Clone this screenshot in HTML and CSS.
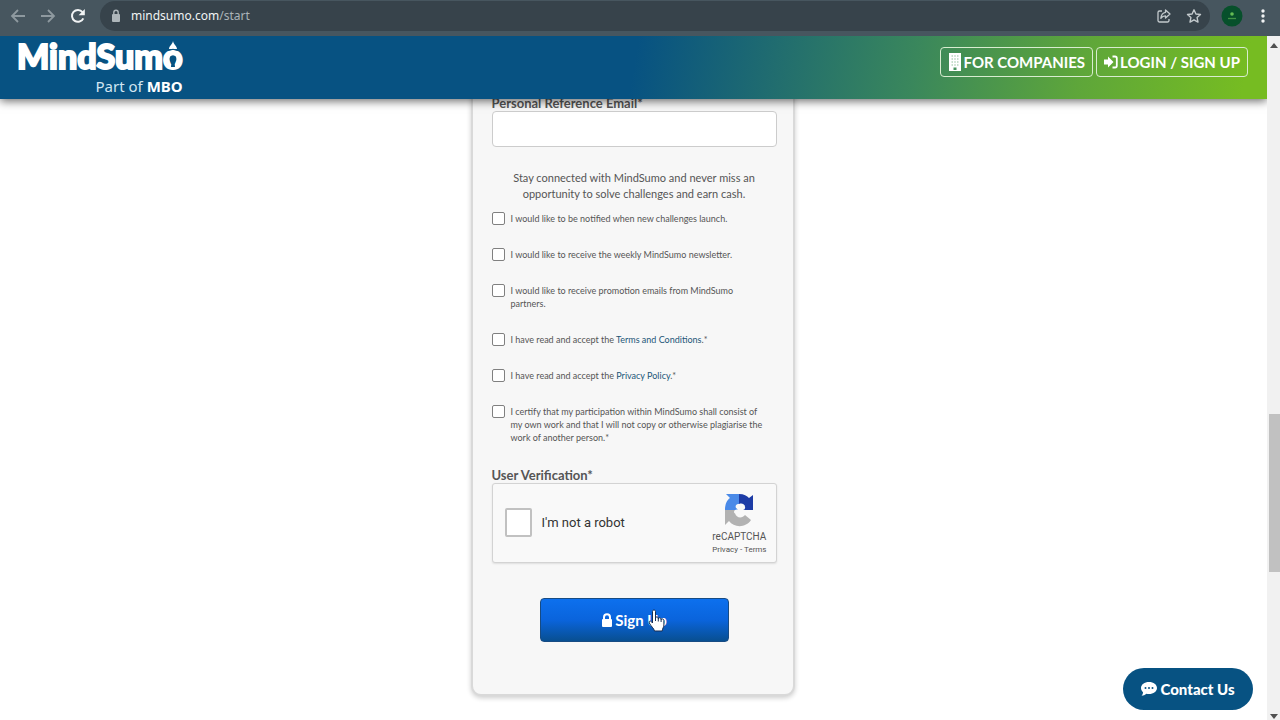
FILE: index.html
```html
<!DOCTYPE html>
<html lang="en">
<head>
<meta charset="utf-8">
<meta name="viewport" content="width=device-width, initial-scale=1">
<title>MindSumo</title>
<link rel="stylesheet" href="styles.css">
</head>
<body>
<div class="toolbar">
  <button class="tool dim" type="button" aria-label="Back"><svg width="16" height="16" viewBox="0 0 16 16"><path d="M15 8H2.5M8 2 2 8l6 6" fill="none" stroke="currentColor" stroke-width="1.8"/></svg></button>
  <button class="tool dim" type="button" aria-label="Forward"><svg width="16" height="16" viewBox="0 0 16 16"><path d="M1 8h12.500M8 2l6 6-6 6" fill="none" stroke="currentColor" stroke-width="1.8"/></svg></button>
  <button class="tool" type="button" aria-label="Reload"><svg width="16" height="16" viewBox="0 0 16 16"><path d="M13.300 10.300A5.900 5.900 0 1 1 12.500 4.200" fill="none" stroke="currentColor" stroke-width="2"/><path d="M14.800 1v6.200H8.600z" fill="currentColor"/></svg></button>
  <div class="address">
    <svg class="padlock" width="10" height="14" viewBox="0 0 10 14"><rect x="1" y="5" width="8" height="8" rx="1" fill="currentColor"/><path d="M2.800 6V3.500a2.200 2.200 0 0 1 4.400 0V6" fill="none" stroke="currentColor" stroke-width="1.400"/></svg>
    <span class="url">mindsumo.com<span class="path">/start</span></span>
    <button class="tool soft" type="button" aria-label="Share"><svg width="16" height="16" viewBox="0 0 16 16" fill="none" stroke="currentColor" stroke-width="1.300" stroke-linejoin="round"><path d="M6 3H3.500A1.500 1.500 0 0 0 2 4.500v8A1.500 1.500 0 0 0 3.500 14h8a1.500 1.500 0 0 0 1.500-1.500V11"/><path d="M9.500 2 14 6l-4.500 4V7.800C7.300 7.800 6 8.500 4.800 10.300 5.200 7 6.800 4.700 9.500 4.300z"/></svg></button>
    <button class="tool soft" type="button" aria-label="Bookmark"><svg width="16" height="16" viewBox="0 0 16 16"><path d="m8 1.800 1.900 4.200 4.600.5-3.400 3.100.9 4.500-4-2.300-4 2.300.9-4.500L1.500 6.500 6.100 6z" fill="none" stroke="currentColor" stroke-width="1.400" stroke-linejoin="round"/></svg></button>
  </div>
  <button class="tool profile" type="button" aria-label="Profile"><svg width="22" height="22" viewBox="0 0 22 22"><circle cx="11" cy="11" r="10.500" fill="#07502b"/><circle cx="11" cy="9" r="1.800" fill="#65bd54"/><path d="M7 13.500h8" stroke="#429345" stroke-width="1.300"/></svg></button>
  <button class="tool menu" type="button" aria-label="Menu"><svg width="6" height="16" viewBox="0 0 6 16" fill="currentColor"><circle cx="3" cy="3" r="1.700"/><circle cx="3" cy="8" r="1.700"/><circle cx="3" cy="13" r="1.700"/></svg></button>
</div>
<div class="window">
  <div class="page">
    <header class="header">
      <a class="brand" href="#">
        <span class="wordmark">MindSum<span class="brand-o">o<svg class="flame" width="18" height="30" viewBox="0 0 18 30"><path d="M9 0c.5 3.400 4 5 4 8H5c0-3 3.500-4.600 4-8z" fill="#fff"/><path d="M4 9.500q5-2.500 10 0" fill="none" stroke="#075282" stroke-width="1"/><circle cx="9" cy="18" r="3.400" fill="#075282"/><path d="M7.600 20h2.800l.6 6H7z" fill="#075282"/></svg></span></span>
        <span class="tagline">Part of <b>MBO</b></span>
      </a>
      <nav class="nav">
        <a class="nav-link" href="#"><svg width="14" height="18" viewBox="0 0 14 18"><path d="M1 0h12v18H1z" fill="#fff"/><path d="M3.500 3h7M3.500 6h7M3.500 9h7M3.500 12h7" stroke="#8fc09b" stroke-width="1.200" stroke-dasharray="1.500 1.250"/><path d="M5.500 14.500h3V17h-3z" fill="#4b9561"/></svg>FOR COMPANIES</a>
        <a class="nav-link" href="#"><svg width="14" height="14" viewBox="0 0 14 14"><path d="M0 4.500h4V1.500L9.500 7 4 12.500V9.500H0z" fill="#fff"/><path d="M8.500 1.500H11A1.800 1.800 0 0 1 12.800 3.300v7.400A1.800 1.800 0 0 1 11 12.500H8.500" fill="none" stroke="#fff" stroke-width="1.800"/></svg>LOGIN / SIGN UP</a>
      </nav>
    </header>
    <main class="main">
      <form class="card">
        <label class="label" for="reference">Personal Reference Email*</label>
        <input class="field" id="reference" type="email">
        <p class="intro">Stay connected with MindSumo and never miss an opportunity to solve challenges and earn cash.</p>
        <div class="options">
          <div class="option"><input class="tick" type="checkbox" id="c1"><label for="c1">I would like to be notified when new challenges launch.</label></div>
          <div class="option"><input class="tick" type="checkbox" id="c2"><label for="c2">I would like to receive the weekly MindSumo newsletter.</label></div>
          <div class="option"><input class="tick" type="checkbox" id="c3"><label for="c3">I would like to receive promotion emails from MindSumo partners.</label></div>
          <div class="option"><input class="tick" type="checkbox" id="c4"><label for="c4">I have read and accept the <a href="#">Terms and Conditions</a>.*</label></div>
          <div class="option"><input class="tick" type="checkbox" id="c5"><label for="c5">I have read and accept the <a href="#">Privacy Policy</a>.*</label></div>
          <div class="option"><input class="tick" type="checkbox" id="c6"><label for="c6">I certify that my participation within MindSumo shall consist of my own work and that I will not copy or otherwise plagiarise the work of another person.*</label></div>
        </div>
        <div class="label">User Verification*</div>
        <div class="captcha">
          <input class="robot" type="checkbox" id="robot">
          <label class="robot-label" for="robot">I'm not a robot</label>
          <div class="captcha-brand">
            <svg width="30" height="34" viewBox="0 0 30 34"><path d="M1 17C1 11 3 7 6 5L2 1h13v10c-3 0-4 2-3 4l3 2z" fill="#4a8ae8"/><path d="M15 1c5 0 8 2 10 4l4-3v15H18l3-4c-1-2-3-3-6-2z" fill="#1d3ca6"/><path d="M1 17v15l4-4c5 7 17 7 22-1l-6-5c-3 4-9 3-10-2l4-3z" fill="#b2b2b2"/><path d="M15 17c-3-1-3-5 0-5 1 0 2 1 2 2 2-2 5-1 4 1 0 1-1 2-2 2 2 2 0 5-2 4l-2-2c-1 2-5 2-5 0s2-3 5-2z" fill="#f9f9f9"/></svg>
            <span class="captcha-name">reCAPTCHA</span>
            <span class="captcha-links"><a href="#">Privacy</a> - <a href="#">Terms</a></span>
          </div>
        </div>
        <button class="submit" type="button"><svg width="12" height="14" viewBox="0 0 12 14"><rect x="1" y="6" width="10" height="8" rx="1" fill="#fff"/><path d="M3 7V4.200a3 3 0 0 1 6 0V7" fill="none" stroke="#fff" stroke-width="2"/></svg>Sign Up
          <svg class="cursor" width="18" height="24" viewBox="0 0 18 24"><path d="M4.500 14V2.500c0-2 3-2 3 0V9c0-1.500 2.600-1.500 2.800 0v.7c.3-1.400 2.600-1.200 2.800.3v.6c.5-1.200 2.800-.8 2.800.9V16c0 2-1.500 3.500-1.700 6H6.500C6 19.500 2.800 17 1.300 14c-.8-1.800 1-2.600 2-1.400z" fill="#fff" stroke="#182d52" stroke-width="1"/><path d="M7.500 8v4M10.300 9v3.500M13.100 10v3" stroke="#182d52" stroke-width="1"/></svg>
        </button>
      </form>
    </main>
    <button class="contact" type="button"><svg width="16" height="14" viewBox="0 0 16 14"><path d="M8 0c4.500 0 8 2.600 8 6s-3.500 6-8 6c-1 0-1.800-.1-2.600-.3C4 13 2.300 13.700.5 13.700 1.600 12.700 2 11.500 2 10.200.8 9.200 0 7.700 0 6c0-3.400 3.500-6 8-6z" fill="#fff"/><circle cx="4.500" cy="6" r="1" fill="#075282"/><circle cx="8" cy="6" r="1" fill="#075282"/><circle cx="11.500" cy="6" r="1" fill="#075282"/></svg>Contact Us</button>
  </div>
  <div class="scrollbar">
    <svg width="8" height="5" viewBox="0 0 8 5"><path d="M4 0l4 5H0z" fill="#505050"/></svg>
    <div class="track"><div class="thumb"></div></div>
    <svg width="8" height="5" viewBox="0 0 8 5"><path d="M0 0h8L4 5z" fill="#505050"/></svg>
  </div>
</div>
</body>
</html>
```
FILE: styles.css
```css
* { box-sizing: border-box; }
body {
  margin: 0;
  height: 100vh;
  display: flex;
  flex-direction: column;
  overflow: hidden;
  font-family: Lato, "Liberation Sans", sans-serif;
  color: #555;
  background: #fff;
}
button { font-family: inherit; border: 0; cursor: pointer; }
a { color: #1c5677; text-decoration: none; }
svg { flex: none; }

.toolbar {
  display: flex;
  align-items: center;
  height: 36px;
  padding: 0 14px 4px 10px;
  background: #47565f;
}
.tool {
  display: flex;
  padding: 0;
  margin-right: 14px;
  background: none;
  color: #f1f3f4;
}
.tool.dim { color: #8e999f; }
.toolbar > .tool { width: 16px; }
.tool.soft { color: #c3cacd; margin: 0 0 0 14px; }
.address {
  flex: 1;
  display: flex;
  align-items: center;
  height: 30px;
  padding: 0 8px 0 11px;
  border-radius: 15px;
  background: #37434b;
}
.padlock { color: #aeb6ba; margin-right: 10px; }
.url {
  flex: 1;
  font: 12px/20px "Noto Sans", sans-serif;
  color: #f0f3f4;
}
.path { color: #aab3b8; }
.toolbar > .profile { width: 22px; margin: 0 17px 0 11px; }
.toolbar > .menu { width: 6px; margin: 0; }

.window { flex: 1; min-height: 0; display: flex; }
.page {
  flex: 1;
  display: flex;
  flex-direction: column;
  position: relative;
  min-width: 0;
  overflow: hidden;
}
.header {
  position: relative;
  z-index: 1;
  display: flex;
  justify-content: space-between;
  align-items: flex-start;
  height: 63px;
  flex: none;
  padding: 0 19px 0 17px;
  background: linear-gradient(100deg, #075282 0%, #075282 50%, #3a875c 72%, #5ea63a 85%, #76bc22 98%);
  box-shadow: 0 2px 9px rgba(0, 0, 0, .6);
}
.brand { display: flex; flex-direction: column; align-items: flex-end; color: #fff; }
.wordmark {
  font-size: 34px;
  font-weight: 900;
  line-height: 40px;
  -webkit-text-stroke: 2px #fff;
}
.brand-o { position: relative; }
.flame { position: absolute; left: 1px; top: 6px; }
.tagline { font: 15px/20px "Noto Sans", sans-serif; color: #d2e6f2; }
.tagline b { color: #fff; }
.nav { display: flex; gap: 3px; padding-top: 11px; }
.nav-link {
  display: flex;
  align-items: center;
  gap: 2px;
  height: 30px;
  padding: 0 7px;
  border: 1px solid #d8ecd0;
  border-radius: 4px;
  color: #fff;
  font-size: 15px;
  font-weight: 700;
}

.main { flex: 1; min-height: 0; padding-right: 2px; }
.card {
  width: 324px;
  margin: -22px auto 0;
  padding: 16px 16px 52px 19px;
  border: 2px solid #d9d9d9;
  border-radius: 10px;
  background: #f7f7f7;
  box-shadow: 0 2px 5px rgba(0, 0, 0, .2);
}
.label { display: block; font-size: 13px; font-weight: 700; line-height: 16px; }
.field {
  display: block;
  width: 100%;
  height: 36px;
  border: 1px solid #ccc;
  border-radius: 4px;
  background: #fff;
}
.intro {
  margin: 23px 16px 10px;
  font-size: 11px;
  line-height: 16px;
  text-align: center;
}
.options { display: flex; flex-direction: column; gap: 23px; margin-bottom: 23px; }
.option {
  display: flex;
  align-items: flex-start;
  gap: 6px;
  padding-right: 10px;
  font-size: 9px;
  line-height: 13px;
}
.tick {
  appearance: none;
  flex: none;
  width: 13px;
  height: 13px;
  margin: 0;
  border: 1px solid #808080;
  border-radius: 2px;
  background: #fff;
}
.captcha {
  display: flex;
  align-items: center;
  height: 80px;
  padding: 0 9px 0 12px;
  border: 1px solid #d3d3d3;
  border-radius: 3px;
  background: #f9f9f9;
  box-shadow: 0 1px 2px rgba(0, 0, 0, .1);
}
.robot {
  appearance: none;
  width: 27px;
  height: 29px;
  margin: 0 10px 2px 0;
  border: 2px solid #c1c1c1;
  border-radius: 2px;
  background: #fff;
}
.robot-label { flex: 1; font: 13px/18px Roboto, sans-serif; color: #333; }
.captcha-brand {
  display: flex;
  flex-direction: column;
  align-items: center;
  padding-top: 3px;
  font-family: Roboto, sans-serif;
  color: #555;
}
.captcha-name { font-size: 10px; line-height: 14px; margin-top: 3px; }
.captcha-links { font-size: 8px; line-height: 12px; }
.captcha-links a { color: inherit; }
.submit {
  position: relative;
  display: flex;
  align-items: center;
  justify-content: center;
  gap: 2px;
  width: 189px;
  height: 44px;
  margin: 35px auto 0;
  border: 1px solid #174b83;
  border-radius: 4px;
  background: linear-gradient(#0d70ee, #0a64dc 50%, #084f91);
  color: #fff;
  font-size: 15px;
  font-weight: 700;
}
.cursor { position: absolute; left: 107px; top: 10px; }
.contact {
  position: absolute;
  right: 14px;
  bottom: 10px;
  display: flex;
  align-items: center;
  justify-content: center;
  gap: 3px;
  width: 130px;
  height: 42px;
  padding: 0;
  border-radius: 21px;
  background: #075282;
  color: #fff;
  font-size: 15px;
  font-weight: 900;
}
.scrollbar {
  display: flex;
  flex-direction: column;
  align-items: center;
  width: 13px;
  padding: 7px 0 1px;
  background: #f1f1f1;
}
.track {
  flex: 1;
  align-self: stretch;
  display: grid;
  grid-template-rows: 366fr 158fr 142fr;
}
.thumb { grid-row: 2; margin-left: 2px; background: #c1c1c1; }
```
